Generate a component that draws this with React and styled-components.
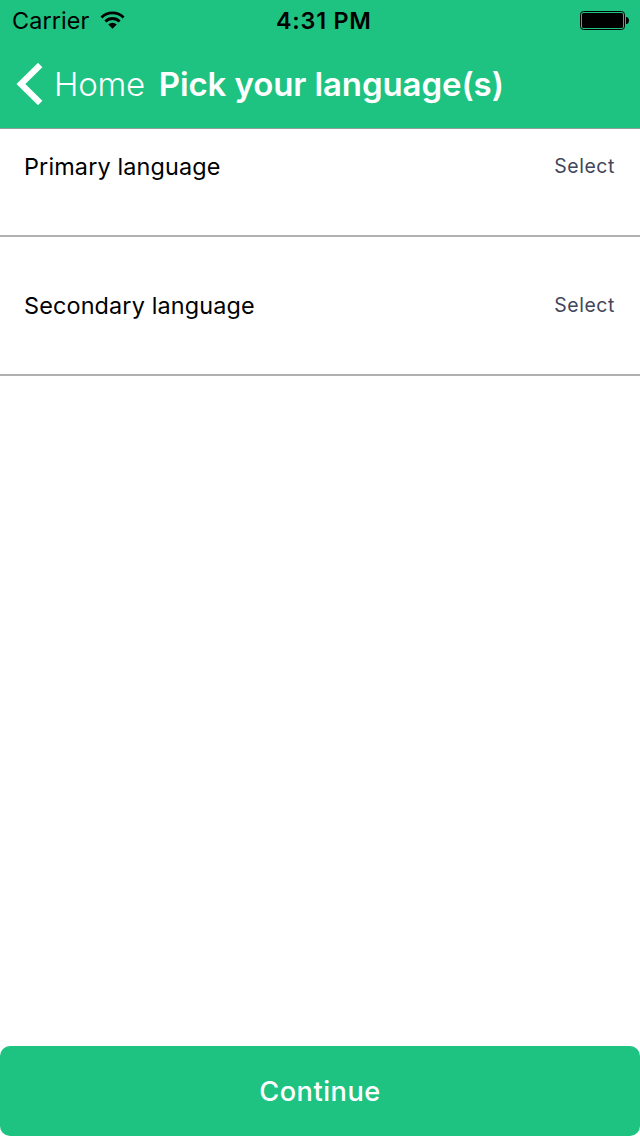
import React from "react";
import styled, { createGlobalStyle } from "styled-components";

const Global = createGlobalStyle`
  * { box-sizing: border-box; }
  body { margin: 0; background: #fff; font-family: Inter, "Liberation Sans", sans-serif; }
`;

const Screen = styled.main`
  width: 640px;
  height: 1136px;
  display: flex;
  flex-direction: column;
  background: #fff;
`;

const Header = styled.header`
  height: 129px;
  background: #1ec382;
  border-bottom: 1px solid #8f9f98;
`;

const StatusBar = styled.div`
  height: 40px;
  display: grid;
  grid-template-columns: 276px 1fr auto;
  align-items: center;
  padding-right: 11px;
  color: #000;
`;

const Carrier = styled.div`
  display: flex;
  align-items: center;
  padding-left: 12px;
  gap: 10px;
`;

const Label = styled.span`
  display: block;
  padding-top: ${(p) => p.$top || 0}px;
  font-size: ${(p) => p.$size}px;
  font-weight: ${(p) => p.$weight || 400};
  letter-spacing: ${(p) => p.$spacing || 0}px;
  line-height: ${(p) => p.$line || 28}px;
  white-space: nowrap;
  color: ${(p) => p.$color || "#000"};
`;

const NavBar = styled.nav`
  height: 88px;
  display: flex;
  align-items: center;
  padding-left: 16px;
`;

const BackButton = styled.button`
  display: flex;
  align-items: center;
  gap: 11px;
  padding: 0;
  margin: 0 14px 0 0;
  border: 0;
  background: none;
  font-family: inherit;
`;

const Title = styled.h1`
  margin: 0;
`;

const Row = styled.section`
  height: ${(p) => p.$height}px;
  display: flex;
  justify-content: space-between;
  align-items: center;
  padding: 0 25px 0 24px;
  padding-bottom: ${(p) => p.$bottom || 0}px;
  border-bottom: 2px solid #b0b0b0;
`;

const Continue = styled.button`
  height: 90px;
  margin-top: auto;
  padding: 0;
  border: 0;
  border-radius: 10px;
  background: #1ec382;
  font-family: inherit;
  text-align: center;
`;

const Wifi = () => (
  <svg width="25" height="18" viewBox="0 0 26 18">
    <path d="M1.500 6.300a16.500 16.500 0 0 1 23 0M5.600 10.500a10.500 10.500 0 0 1 14.800 0" fill="none" stroke="#000" strokeWidth="2.900" />
    <path d="M8.600 13.600a6.200 6.200 0 0 1 8.800 0L13 18z" fill="#000" />
  </svg>
);

const Battery = () => (
  <svg width="49" height="19" viewBox="0 0 49 19">
    <rect x=".5" y=".5" width="44" height="18" rx="3" fill="none" stroke="#000" />
    <rect x="2" y="2" width="41" height="15" rx="1.500" />
    <path d="M46 6h1q2 1 2 3.500T47 13h-1z" />
  </svg>
);

const Chevron = () => (
  <svg width="27" height="42" viewBox="0 0 27 42">
    <path d="M24.200 2L4.900 21l19.300 19" fill="none" stroke="#fff" strokeWidth="6.200" />
  </svg>
);

export default function App() {
  return (
    <Screen>
      <Global />
      <Header>
        <StatusBar>
          <Carrier><Label $size={23.4} $top={2} $spacing={0.12}>Carrier</Label><Wifi /></Carrier>
          <Label $size={23.4} $top={2} $weight={600} $spacing={0.75}>4:31 PM</Label>
          <Battery />
        </StatusBar>
        <NavBar>
          <BackButton><Chevron /><Label $size={33} $line={40} $weight={300} $spacing={-0.3} $color="#fff">Home</Label></BackButton>
          <Title><Label $size={33} $line={40} $weight={600} $spacing={-0.1} $color="#fff">Pick your language(s)</Label></Title>
        </NavBar>
      </Header>
      <Row $height={108} $bottom={32}>
        <Label $size={23.4} $top={1} $spacing={0.15}>Primary language</Label>
        <Label $size={19.4} $spacing={0.6} $color="#42465a">Select</Label>
      </Row>
      <Row $height={139} $bottom={2}>
        <Label $size={23.4} $top={2} $spacing={0.15}>Secondary language</Label>
        <Label $size={19.4} $spacing={0.6} $color="#42465a">Select</Label>
      </Row>
      <Continue><Label $size={27.2} $line={34} $top={2} $weight={500} $spacing={0.5} $color="#fff">Continue</Label></Continue>
    </Screen>
  );
}
